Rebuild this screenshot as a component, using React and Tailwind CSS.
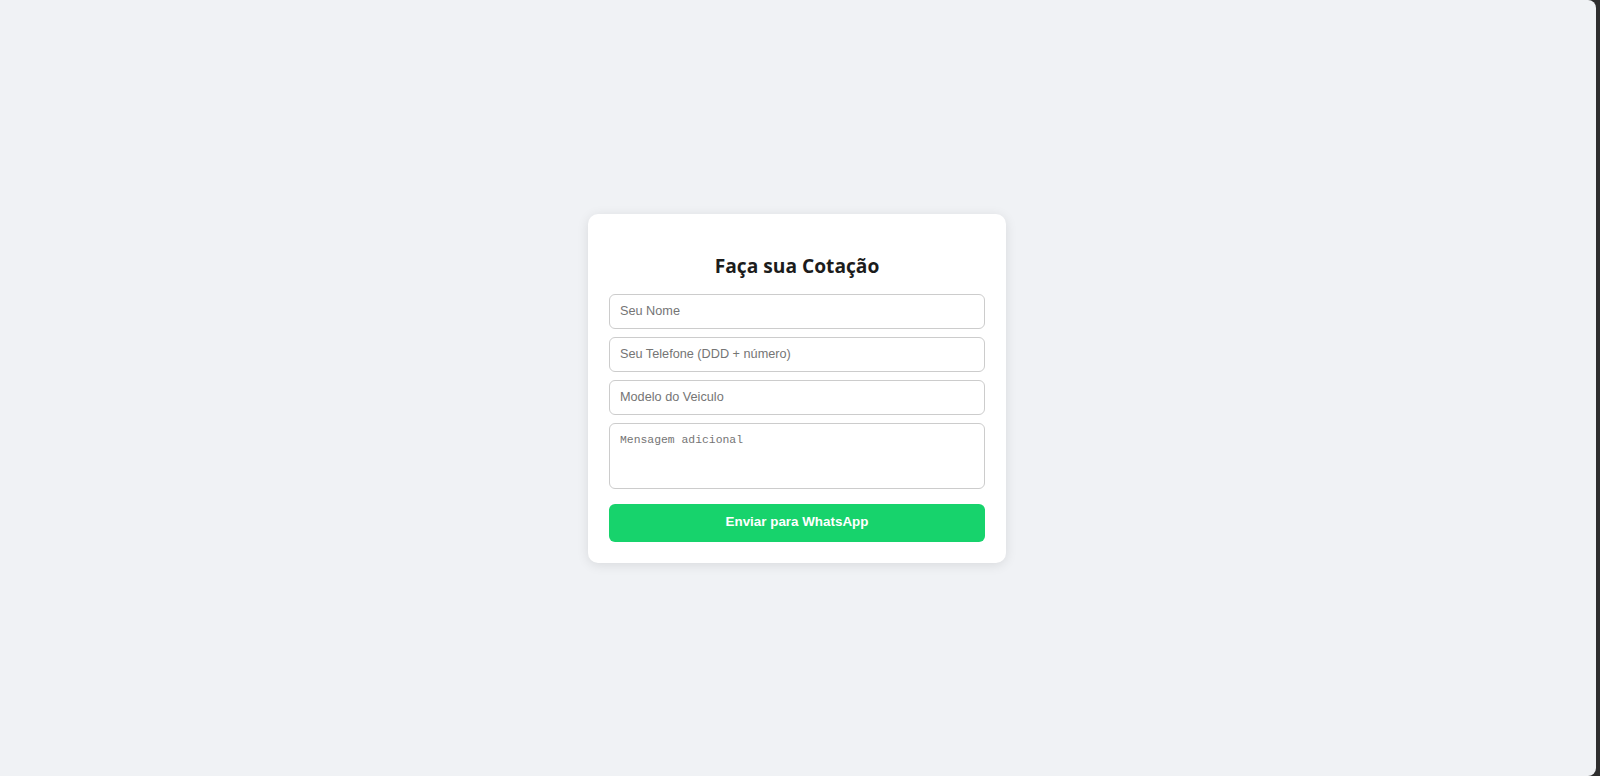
const Field = ({ placeholder }) => {
  return (
    <input
      className="block w-full h-[35px] rounded-md border border-[#cccccc] bg-white px-[10px] text-[12.7px] text-[#333] outline-none placeholder:text-[#757575]"
      style={{ fontFamily: '"Liberation Sans", Arial, sans-serif' }}
      placeholder={placeholder}
    />
  );
};

export default function App() {
  return (
    <div className="flex h-screen w-full bg-[#2e2e2e] pr-[4px]">
      <div className="flex flex-1 items-center justify-center rounded-r-lg bg-[#f0f2f5]">
        <div className="-ml-[2px] w-[418px] rounded-[10px] bg-white px-[21px] pt-[20px] pb-[21px] shadow-[0_2px_12px_rgba(0,0,0,0.1)]">
          <h2
            className="mt-[18px] mb-[14px] text-center text-[19.2px] font-bold leading-7 text-[#1c1c1c]"
            style={{ fontFamily: '"Open Sans", "Noto Sans", sans-serif' }}
          >
            Faça sua Cotação
          </h2>
          <div className="flex flex-col gap-2">
            <Field placeholder="Seu Nome" />
            <Field placeholder="Seu Telefone (DDD + número)" />
            <Field placeholder="Modelo do Veiculo" />
            <textarea
              className="block h-[66px] w-full resize-none rounded-md border border-[#cccccc] bg-white px-[10px] py-[8px] text-[11.4px] leading-[16px] outline-none placeholder:text-[#757575]"
              style={{ fontFamily: '"Liberation Mono", monospace' }}
              placeholder="Mensagem adicional"
            ></textarea>
          </div>
          <button
            className="mt-[15px] block h-[38px] w-full rounded-md bg-[#17d36c] text-[13.4px] font-bold text-white"
            style={{ fontFamily: '"Liberation Sans", Arial, sans-serif' }}
          >
            Enviar para WhatsApp
          </button>
        </div>
      </div>
    </div>
  );
}
